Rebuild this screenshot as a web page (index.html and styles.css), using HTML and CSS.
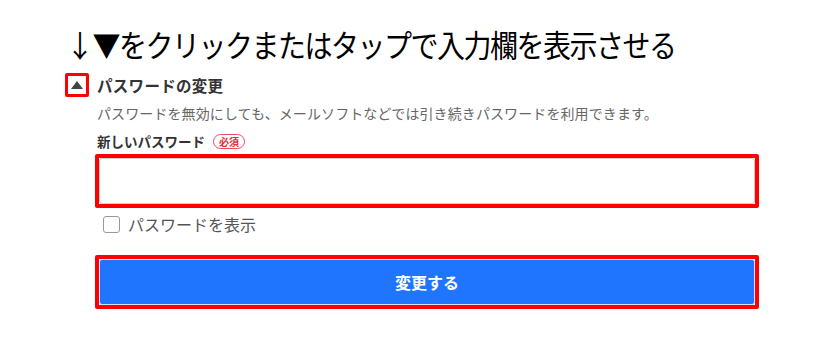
FILE: index.html
```html
<!DOCTYPE html>
<html lang="ja">
<head>
<meta charset="utf-8">
<link rel="stylesheet" href="styles.css">
</head>
<body>
<div class="page">
  <h1 class="note">↓▼をクリックまたはタップで入力欄を表示させる</h1>
  <div class="toggle-row">
    <span class="caret-box"><span class="caret"></span></span>
    <span class="title">パスワードの変更</span>
  </div>
  <div class="content">
    <p class="desc">パスワードを無効にしても、メールソフトなどでは引き続きパスワードを利用できます。</p>
    <div class="label-row">
      <span class="label">新しいパスワード</span>
      <span class="badge">必須</span>
    </div>
    <div class="mark">
      <input class="pw" type="password">
    </div>
    <label class="check-row">
      <span class="checkbox"></span>
      <span class="check-label">パスワードを表示</span>
    </label>
    <div class="mark mark-btn">
      <button class="submit">変更する</button>
    </div>
  </div>
</div>
</body>
</html>
```

FILE: styles.css
```css
* { box-sizing: border-box; }
html, body { margin: 0; padding: 0; background: #fff; }
body {
  font-family: "Noto Sans CJK JP", "Noto Sans", sans-serif;
  color: #333;
  width: 816px;
  height: 357px;
  overflow: hidden;
}
.page { padding: 25px 0 0 65px; }
.note {
  margin: 0 0 0 1px;
  font-size: 28px;
  font-weight: 400;
  line-height: 38px;
  letter-spacing: -1.5px;
  color: #000;
  transform: scaleY(1.08);
  transform-origin: left center;
}
.toggle-row {
  display: flex;
  align-items: center;
  margin-top: 10px;
  height: 24px;
}
.caret-box {
  width: 24px;
  height: 24px;
  border: 3px solid #ff0000;
  border-radius: 2px;
  display: flex;
  align-items: center;
  justify-content: center;
}
.caret {
  width: 0; height: 0;
  border-left: 6px solid transparent;
  border-right: 6px solid transparent;
  border-bottom: 8px solid #444;
  margin-top: -1px;
}
.title {
  margin-left: 8px;
  font-size: 15.5px;
  font-weight: 700;
  color: #333;
  letter-spacing: 0.3px;
}
.content { margin-left: 30px; width: 664px; }
.desc {
  margin: 6px 0 0 2px;
  font-size: 14px;
  line-height: 20px;
  color: #666;
  letter-spacing: 0.1px;
}
.label-row {
  display: flex;
  align-items: center;
  margin: 9px 0 0 2px;
  height: 18px;
}
.label { font-size: 13.5px; font-weight: 700; color: #333; }
.badge {
  margin-left: 8px;
  border: 1px solid #e84a5f;
  color: #e03040;
  border-radius: 8px;
  font-size: 10px;
  font-weight: 700;
  line-height: 13px;
  padding: 0 5px;
}
.mark {
  margin-top: 4px;
  border: 4px solid #ff0000;
  border-radius: 2px;
  height: 54px;
  padding: 0;
}
.pw {
  display: block;
  width: 100%;
  height: 100%;
  border: 1px solid #ccc;
  border-radius: 3px;
  background: #fff;
  margin: 0;
  outline: none;
}
.check-row {
  display: flex;
  align-items: center;
  margin: 7px 0 0 8px;
  height: 18px;
}
.checkbox {
  width: 17px; height: 17px;
  border: 1px solid #999;
  border-radius: 3px;
  background: #fff;
}
.check-label {
  margin-left: 8px;
  font-size: 16px;
  line-height: 18px;
  color: #555;
}
.mark-btn { margin-top: 22px; }
.submit {
  display: block;
  width: 100%;
  height: 100%;
  margin: 0;
  border: 1px solid #cfe0ff;
  border-radius: 3px;
  background: #1f75fe;
  color: #fff;
  font-family: "Noto Sans CJK JP", "Noto Sans", sans-serif;
  font-size: 16px;
  font-weight: 700;
}
```
